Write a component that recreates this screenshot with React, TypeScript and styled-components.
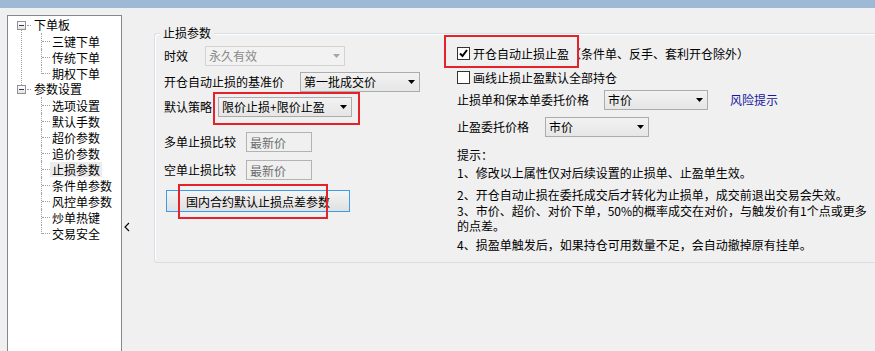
import React from 'react'
import styled, { createGlobalStyle, css } from 'styled-components'

const GlobalStyle = createGlobalStyle`
  html, body {
    margin: 0;
    padding: 0;
  }
  body {
    width: 875px;
    height: 351px;
    overflow: hidden;
    background: #f0f0f0;
    font-family: 'Noto Sans CJK SC', 'Liberation Sans', sans-serif;
    font-size: 12px;
    color: #000;
  }
`

const Window = styled.div`
  display: flex;
  flex-direction: column;
  width: 875px;
  height: 351px;
`
const TitleBar = styled.div`
  flex: none;
  height: 8px;
  background: #9db9d5;
`
const Main = styled.div`
  display: flex;
  flex: 1;
  min-height: 0;
`

/* 左侧树 */
const TreePanel = styled.div`
  flex: none;
  width: 113px;
  margin: 7px 0 0 7px;
  padding-top: 1px;
  background: #fff;
  border: 1px solid #828790;
  border-bottom: none;
`
const TreeNode = styled.div<{ $hasNext?: boolean }>`
  position: relative;

  ${(p) =>
    p.$hasNext &&
    css`
      &::before {
        content: '';
        position: absolute;
        left: 13px;
        top: 13px;
        height: 55px;
        border-left: 1px dotted #a0a0a0;
      }
    `}
`
const RootRow = styled.div`
  display: flex;
  align-items: center;
  height: 16px;
  padding-left: 9px;
`
const ExpandBox = styled.span`
  display: flex;
  align-items: center;
  justify-content: center;
  box-sizing: border-box;
  width: 9px;
  height: 9px;
  border: 1px solid #919191;
  background: linear-gradient(#ffffff, #e4e4e4);

  &::after {
    content: '';
    width: 5px;
    height: 1px;
    background: #1f3c6c;
  }
`
const RootDots = styled.span`
  width: 4px;
  margin-left: 1px;
  border-top: 1px dotted #a0a0a0;
`
const RootLabel = styled.span`
  margin-left: 3px;
  line-height: 14px;
  white-space: nowrap;
`
const ChildList = styled.div`
  margin-left: 33px;
`
const ChildRow = styled.div`
  position: relative;
  display: flex;
  align-items: center;
  height: 16px;
  padding-left: 9px;

  &::before {
    content: '';
    position: absolute;
    left: 1px;
    top: 8px;
    width: 8px;
    border-top: 1px dotted #a0a0a0;
  }
  &::after {
    content: '';
    position: absolute;
    left: 0;
    top: 0;
    bottom: 0;
    border-left: 1px dotted #a0a0a0;
  }
  &:last-child::after {
    bottom: auto;
    height: 9px;
  }
`
const ChildLabel = styled.span<{ $selected?: boolean }>`
  padding: 0 2px;
  line-height: 15px;
  white-space: nowrap;
  background: ${(p) => (p.$selected ? '#ececec' : 'transparent')};
`

/* 分隔条 */
const Splitter = styled.div`
  flex: none;
  width: 31px;
  padding: 210px 0 0 1px;
`

/* 右侧内容 */
const Content = styled.div`
  flex: 1;
  min-width: 0;
  padding-top: 25px;
`
const GroupBox = styled.div`
  position: relative;
  box-sizing: border-box;
  height: 230px;
  border: 1px solid #d5dfe5;
  border-right: none;
  border-radius: 3px 0 0 3px;
  box-shadow: inset 1px 1px 0 #ffffff;
`
const Legend = styled.span`
  position: absolute;
  top: -8px;
  left: 5px;
  padding: 0 3px;
  line-height: 14px;
  background: #f0f0f0;
`
const GroupBody = styled.div`
  display: grid;
  grid-template-columns: 293px 1fr;
  padding-left: 9px;
`
const Column = styled.div`
  display: flex;
  flex-direction: column;
  align-items: flex-start;
`
const FieldRow = styled.div<{ $mt: number }>`
  display: flex;
  align-items: center;
  height: 20px;
  margin-top: ${(p) => p.$mt}px;
`
const Label = styled.span<{ $w: number }>`
  flex: none;
  width: ${(p) => p.$w}px;
  line-height: 14px;
  white-space: nowrap;
`
const ComboBox = styled.div<{ $w: number; $disabled?: boolean }>`
  display: flex;
  align-items: center;
  justify-content: space-between;
  box-sizing: border-box;
  width: ${(p) => p.$w}px;
  height: 20px;
  padding: 0 4px 0 3px;
  border: 1px solid ${(p) => (p.$disabled ? '#d3d3d3' : '#acacac')};
  background: ${(p) => (p.$disabled ? '#f2f2f2' : 'linear-gradient(#f2f2f2, #e6e6e6)')};
  color: ${(p) => (p.$disabled ? '#8a8a8a' : '#000')};
  line-height: 14px;
  white-space: nowrap;
`
const TextBox = styled.div`
  box-sizing: border-box;
  width: 66px;
  height: 20px;
  padding: 2px 3px 0;
  border: 1px solid #b3b3b3;
  background: #f0f0f0;
  color: #6d6d6d;
  line-height: 15px;
`
const PushButton = styled.div`
  display: flex;
  align-items: center;
  justify-content: center;
  box-sizing: border-box;
  width: 184px;
  height: 22px;
  margin: 10px 0 0 2px;
  border: 1px solid #3c9bf0;
  background: linear-gradient(#f4f4f4, #e0e0e0);
  white-space: nowrap;
`
const Marked = styled.div`
  position: relative;
  display: flex;
  align-items: center;
`
const RedBox = styled.span<{ $top: number; $left: number; $w: number; $h: number }>`
  position: absolute;
  top: ${(p) => p.$top}px;
  left: ${(p) => p.$left}px;
  width: ${(p) => p.$w}px;
  height: ${(p) => p.$h}px;
  box-sizing: border-box;
  border: 2px solid #e3232c;
  pointer-events: none;
`
const CheckRow = styled.div<{ $mt: number }>`
  position: relative;
  display: flex;
  align-items: center;
  gap: 3px;
  height: 14px;
  margin-top: ${(p) => p.$mt}px;
  white-space: nowrap;
`
const CheckBox = styled.span`
  display: flex;
  align-items: center;
  justify-content: center;
  flex: none;
  box-sizing: border-box;
  width: 13px;
  height: 13px;
  border: 1px solid #333;
  background: #fff;
`
const LinkText = styled.span`
  margin-left: 22px;
  color: #1616a0;
  line-height: 14px;
`
const Tips = styled.div`
  width: 420px;
  margin-top: 10px;
  line-height: 15px;
`
const Tip = styled.p<{ $mt: number }>`
  margin: ${(p) => p.$mt}px 0 0;
`

const Arrow = ({ color = '#000' }: { color?: string }) => (
  <svg width="7" height="4" viewBox="0 0 7 4">
    <polygon points="0,0 7,0 3.5,4" fill={color} />
  </svg>
)

const Check = () => (
  <svg width="11" height="11" viewBox="0 0 11 11">
    <path d="M2 5.5 L4.5 8 L9 2" fill="none" stroke="#000" strokeWidth="2" />
  </svg>
)

const Chevron = () => (
  <svg width="8" height="10" viewBox="0 0 8 10">
    <polyline points="6,1 2,5 6,9" fill="none" stroke="#000" strokeWidth="1.1" />
  </svg>
)

const tree = [
  { label: '下单板', children: ['三键下单', '传统下单', '期权下单'] },
  {
    label: '参数设置',
    children: ['选项设置', '默认手数', '超价参数', '追价参数', '止损参数', '条件单参数', '风控单参数', '炒单热键', '交易安全']
  }
]

const App: React.FC = () => {
  return (
    <Window>
      <GlobalStyle />
      <TitleBar />
      <Main>
        {/* 设置树 */}
        <TreePanel>
          {tree.map((node, i) => (
            <TreeNode key={node.label} $hasNext={i < tree.length - 1}>
              <RootRow>
                <ExpandBox />
                <RootDots />
                <RootLabel>{node.label}</RootLabel>
              </RootRow>
              <ChildList>
                {node.children.map((c) => (
                  <ChildRow key={c}>
                    <ChildLabel $selected={c === '止损参数'}>{c}</ChildLabel>
                  </ChildRow>
                ))}
              </ChildList>
            </TreeNode>
          ))}
        </TreePanel>

        <Splitter>
          <Chevron />
        </Splitter>

        <Content>
          <GroupBox>
            <Legend>止损参数</Legend>
            <GroupBody>
              <Column>
                <FieldRow $mt={12}>
                  <Label $w={41}>时效</Label>
                  <ComboBox $w={140} $disabled>
                    永久有效
                    <Arrow color="#a6a6a6" />
                  </ComboBox>
                </FieldRow>
                <FieldRow $mt={6}>
                  <Label $w={136}>开仓自动止损的基准价</Label>
                  <ComboBox $w={120}>
                    第一批成交价
                    <Arrow />
                  </ComboBox>
                </FieldRow>
                <FieldRow $mt={5}>
                  <Label $w={54}>默认策略</Label>
                  <Marked>
                    <ComboBox $w={134}>
                      限价止损+限价止盈
                      <Arrow />
                    </ComboBox>
                    <RedBox $top={-5} $left={-5} $w={147} $h={33} />
                  </Marked>
                </FieldRow>
                <FieldRow $mt={15}>
                  <Label $w={82}>多单止损比较</Label>
                  <TextBox>最新价</TextBox>
                </FieldRow>
                <FieldRow $mt={8}>
                  <Label $w={82}>空单止损比较</Label>
                  <TextBox>最新价</TextBox>
                </FieldRow>
                <Marked>
                  <PushButton>国内合约默认止损点差参数</PushButton>
                  <RedBox $top={4} $left={14} $w={150} $h={35} />
                </Marked>
              </Column>

              <Column>
                <CheckRow $mt={12}>
                  <CheckBox>
                    <Check />
                  </CheckBox>
                  开仓自动止损止盈（条件单、反手、套利开仓除外）
                  <RedBox $top={-11} $left={-13} $w={135} $h={33} />
                </CheckRow>
                <CheckRow $mt={10}>
                  <CheckBox />
                  画线止损止盈默认全部持仓
                </CheckRow>
                <FieldRow $mt={6}>
                  <Label $w={147}>止损单和保本单委托价格</Label>
                  <ComboBox $w={104}>
                    市价
                    <Arrow />
                  </ComboBox>
                  <LinkText>风险提示</LinkText>
                </FieldRow>
                <FieldRow $mt={7}>
                  <Label $w={88}>止盈委托价格</Label>
                  <ComboBox $w={104}>
                    市价
                    <Arrow />
                  </ComboBox>
                </FieldRow>
                <Tips>
                  <Tip $mt={0}>提示：</Tip>
                  <Tip $mt={3}>1、修改以上属性仅对后续设置的止损单、止盈单生效。</Tip>
                  <Tip $mt={7}>2、开仓自动止损在委托成交后才转化为止损单，成交前退出交易会失效。</Tip>
                  <Tip $mt={1}>3、市价、超价、对价下单，50%的概率成交在对价，与触发价有1个点或更多的点差。</Tip>
                  <Tip $mt={4}>4、损盈单触发后，如果持仓可用数量不足，会自动撤掉原有挂单。</Tip>
                </Tips>
              </Column>
            </GroupBody>
          </GroupBox>
        </Content>
      </Main>
    </Window>
  )
}

export default App
